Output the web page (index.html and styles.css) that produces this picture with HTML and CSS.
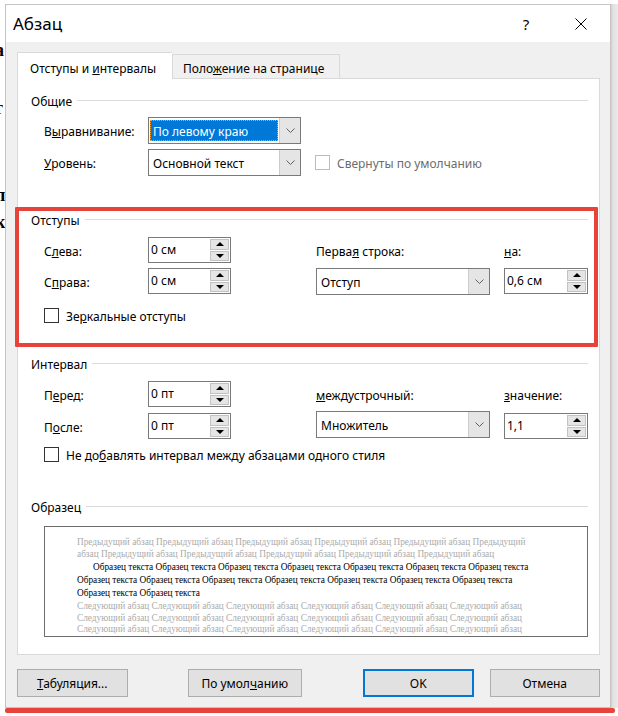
FILE: index.html
```html
<!DOCTYPE html>
<html lang="ru">
<head>
    <meta charset="UTF-8">
    <title>Абзац</title>
    <link rel="stylesheet" href="styles.css">
</head>
<body>
    <div class="desktop">
        <div class="doc-edge">
            <span class="doc-char c-a">а</span>
            <span class="doc-char c-t">т</span>
            <span class="doc-char c-p">п</span>
            <span class="doc-char c-k">к</span>
        </div>

        <div class="dialog">
            <div class="titlebar">
                <span class="title">Абзац</span>
                <span class="tb-btn tb-help">?</span>
                <span class="tb-btn tb-close">
                    <svg width="12" height="12" viewBox="0 0 12 12">
                        <path d="M0.5 0.5 L11.5 11.5 M11.5 0.5 L0.5 11.5" stroke="#000" stroke-width="1" fill="none"/>
                    </svg>
                </span>
            </div>

            <div class="dialog-body">
                <div class="tabs">
                    <div class="tab active">Отступы и <u>и</u>нтервалы</div>
                    <div class="tab">Поло<u>ж</u>ение на странице</div>
                </div>

                <div class="panel">
                    <!-- Общие -->
                    <section class="group">
                        <div class="group-head">Общие</div>
                        <div class="group-body general-grid">
                            <label>В<u>ы</u>равнивание:</label>
                            <div class="combo focused">
                                <div class="combo-value"><span class="combo-selected">По левому краю</span></div>
                                <div class="combo-btn"><svg width="9" height="5" viewBox="0 0 9 5"><polyline points="0.5,0.5 4.5,4.5 8.5,0.5" stroke="#606060" fill="none"/></svg></div>
                            </div>
                            <div></div>
                            <label><u>У</u>ровень:</label>
                            <div class="combo">
                                <div class="combo-value">Основной текст</div>
                                <div class="combo-btn"><svg width="9" height="5" viewBox="0 0 9 5"><polyline points="0.5,0.5 4.5,4.5 8.5,0.5" stroke="#606060" fill="none"/></svg></div>
                            </div>
                            <div class="check-cell disabled">
                                <span class="check"></span>
                                <span class="check-label">Свернуты по умолчанию</span>
                            </div>
                        </div>
                    </section>

                    <!-- Отступы -->
                    <section class="group group-indent">
                        <div class="group-head">Отступы</div>
                        <div class="group-body field-grid">
                            <label>С<u>л</u>ева:</label>
                            <div class="spin">
                                <div class="spin-value">0 см</div>
                                <div class="spin-btns"><span class="spin-btn spin-up"></span><span class="spin-btn spin-down"></span></div>
                            </div>
                            <label class="col-type">Перва<u>я</u> строка:</label>
                            <label class="col-by"><u>н</u>а:</label>

                            <label>С<u>п</u>рава:</label>
                            <div class="spin">
                                <div class="spin-value">0 см</div>
                                <div class="spin-btns"><span class="spin-btn spin-up"></span><span class="spin-btn spin-down"></span></div>
                            </div>
                            <div class="combo col-type">
                                <div class="combo-value">Отступ</div>
                                <div class="combo-btn"><svg width="9" height="5" viewBox="0 0 9 5"><polyline points="0.5,0.5 4.5,4.5 8.5,0.5" stroke="#606060" fill="none"/></svg></div>
                            </div>
                            <div class="spin col-by">
                                <div class="spin-value">0,6 см</div>
                                <div class="spin-btns"><span class="spin-btn spin-up"></span><span class="spin-btn spin-down"></span></div>
                            </div>
                        </div>
                        <div class="group-body check-row">
                            <span class="check"></span>
                            <span class="check-label">Зе<u>р</u>кальные отступы</span>
                        </div>
                    </section>

                    <!-- Интервал -->
                    <section class="group group-spacing">
                        <div class="group-head">Интервал</div>
                        <div class="group-body field-grid spacing-grid">
                            <label>П<u>е</u>ред:</label>
                            <div class="spin">
                                <div class="spin-value">0 пт</div>
                                <div class="spin-btns"><span class="spin-btn spin-up"></span><span class="spin-btn spin-down"></span></div>
                            </div>
                            <label class="col-type"><u>м</u>еждустрочный:</label>
                            <label class="col-by"><u>з</u>начение:</label>

                            <label>П<u>о</u>сле:</label>
                            <div class="spin">
                                <div class="spin-value">0 пт</div>
                                <div class="spin-btns"><span class="spin-btn spin-up"></span><span class="spin-btn spin-down"></span></div>
                            </div>
                            <div class="combo col-type raised">
                                <div class="combo-value">Множитель</div>
                                <div class="combo-btn"><svg width="9" height="5" viewBox="0 0 9 5"><polyline points="0.5,0.5 4.5,4.5 8.5,0.5" stroke="#606060" fill="none"/></svg></div>
                            </div>
                            <div class="spin col-by">
                                <div class="spin-value">1,1</div>
                                <div class="spin-btns"><span class="spin-btn spin-up"></span><span class="spin-btn spin-down"></span></div>
                            </div>
                        </div>
                        <div class="group-body check-row check-row-tight">
                            <span class="check"></span>
                            <span class="check-label">Не до<u>б</u>авлять интервал между абзацами одного стиля</span>
                        </div>
                    </section>

                    <!-- Образец -->
                    <section class="group group-sample">
                        <div class="group-head">Образец</div>
                        <div class="sample">
                            <div class="sample-prev">
                                <p>Предыдущий абзац Предыдущий абзац Предыдущий абзац Предыдущий абзац Предыдущий абзац Предыдущий</p>
                                <p>абзац Предыдущий абзац Предыдущий абзац Предыдущий абзац Предыдущий абзац Предыдущий абзац</p>
                            </div>
                            <div class="sample-cur">
                                <p class="first">Образец текста Образец текста Образец текста Образец текста Образец текста Образец текста Образец текста</p>
                                <p>Образец текста Образец текста Образец текста Образец текста Образец текста Образец текста Образец текста</p>
                                <p>Образец текста Образец текста</p>
                            </div>
                            <div class="sample-next">
                                <p>Следующий абзац Следующий абзац Следующий абзац Следующий абзац Следующий абзац Следующий абзац</p>
                                <p>Следующий абзац Следующий абзац Следующий абзац Следующий абзац Следующий абзац Следующий абзац</p>
                                <p>Следующий абзац Следующий абзац Следующий абзац Следующий абзац Следующий абзац Следующий абзац</p>
                                <p>Следующий абзац Следующий абзац Следующий абзац Следующий абзац Следующий абзац Следующий абзац</p>
                            </div>
                        </div>
                    </section>
                </div>

                <div class="buttons">
                    <button class="btn btn-tabs"><u>Т</u>абуляция...</button>
                    <button class="btn btn-default-set">По умол<u>ч</u>анию</button>
                    <button class="btn btn-ok">OK</button>
                    <button class="btn btn-cancel">Отмена</button>
                </div>
            </div>
        </div>

        <div class="shadow"></div>
    </div>

    <div class="red-line"></div>
</body>
</html>
```

FILE: styles.css
```css
/* Word "Абзац" dialog */
:root {
    --dlg-bg: #f0f0f0;
    --panel-border: #d9d9d9;
    --group-line: #dcdcdc;
    --field-border: #7a7a7a;
    --btn-bg: #e1e1e1;
    --btn-border: #adadad;
    --accent: #0078d7;
    --mark-red: #e8433a;
    --text: #000000;
    --text-disabled: #6d6d6d;
}

*,
*::before,
*::after {
    box-sizing: border-box;
    margin: 0;
    padding: 0;
}

body {
    position: relative;
    width: 618px;
    height: 716px;
    overflow: hidden;
    background: #ffffff;
    font-family: "Segoe UI", "Noto Sans", sans-serif;
    font-size: 12px;
    color: var(--text);
}

u {
    text-underline-offset: 1px;
}

.desktop {
    display: flex;
    align-items: flex-start;
}

/* edge of the document behind the dialog */
.doc-edge {
    width: 5px;
    height: 708px;
    overflow: hidden;
    display: flex;
    flex-direction: column;
    font-family: "Liberation Serif", serif;
    font-size: 18px;
    font-weight: bold;
    line-height: 20px;
}

.doc-char {
    display: block;
    margin-left: -5px;
}

.c-a { margin-top: 40px; }
.c-t { margin-top: 38px; font-weight: normal; }
.c-p { margin-top: 67px; }
.c-k { margin-top: 7px; }

.dialog {
    width: 606px;
    height: 704px;
    margin-top: 4px;
    background: var(--dlg-bg);
    border: 1px solid #c4c4c4;
    display: flex;
    flex-direction: column;
}

.shadow {
    width: 7px;
    height: 704px;
    margin-top: 4px;
    background: linear-gradient(to right, #cfcfcf, #e2e2e2 2px, #eaeaea);
}

.titlebar {
    height: 37px;
    background: #ffffff;
    display: flex;
    align-items: center;
    padding-left: 7px;
    padding-right: 6px;
}

.title {
    flex: 1;
    font-size: 17px;
}

.tb-btn {
    width: 46px;
    height: 37px;
    display: flex;
    align-items: center;
    justify-content: center;
}

.tb-help {
    font-size: 15px;
    margin-right: 9px;
}

.dialog-body {
    padding: 10px 10px 0 11px;
}

/* tabs */
.tabs {
    display: flex;
    align-items: flex-end;
    height: 26px;
}

.tab {
    position: relative;
    height: 24px;
    padding: 6px 0 0 10px;
    line-height: 16px;
    background: var(--dlg-bg);
    border: 1px solid var(--panel-border);
    border-bottom: none;
    width: 168px;
}

.tab.active {
    z-index: 1;
    width: 155px;
    height: 27px;
    margin-bottom: -1px;
    padding: 8px 0 0 12px;
    background: #ffffff;
    border-right: none;
}

.panel {
    position: relative;
    height: 577px;
    background: #ffffff;
    border: 1px solid var(--panel-border);
    padding: 14px 11px 0 13px;
}

.group-head {
    display: flex;
    align-items: center;
    gap: 5px;
    height: 16px;
    line-height: 16px;
    padding-top: 1px;
}

.group-head::after {
    content: "";
    flex: 1;
    height: 1px;
    margin-top: -3px;
    background: var(--group-line);
}

.group-body {
    margin-left: 13px;
}

.group-indent {
    position: relative;
    margin-top: 36px;
}

/* red annotation frame drawn over the group */
.group-indent::before {
    content: "";
    position: absolute;
    left: -16px;
    top: -5px;
    width: 583px;
    height: 140px;
    border: 4px solid var(--mark-red);
    border-radius: 1px;
    pointer-events: none;
}

.group-spacing {
    margin-top: 33px;
}

.group-sample {
    margin-top: 37px;
}

/* grids */
.general-grid {
    display: grid;
    grid-template-columns: 104px 153px auto;
    grid-auto-rows: 27px;
    row-gap: 5px;
    align-items: center;
    margin-top: 8px;
}

.field-grid {
    display: grid;
    grid-template-columns: 104px 83px 85px 174px 14px 84px;
    grid-auto-rows: 26px;
    row-gap: 5px;
    align-items: center;
    margin-top: 9px;
}

.general-grid label,
.field-grid label {
    padding-top: 2px;
}

.spacing-grid {
    row-gap: 6px;
}

.col-type { grid-column: 4; }
.col-by { grid-column: 6; }

/* combo box */
.combo {
    display: flex;
    height: 27px;
    border: 1px solid var(--field-border);
    background: #ffffff;
}

.combo.raised {
    align-self: start;
    margin-top: -2px;
}

.combo-value {
    flex: 1;
    display: flex;
    align-items: center;
    padding: 2px 0 0 4px;
    white-space: nowrap;
}

.combo.focused .combo-value {
    padding: 2px 1px 2px 1px;
}

.combo-selected {
    flex: 1;
    height: 100%;
    display: flex;
    align-items: center;
    padding: 1px 0 0 2px;
    background: var(--accent);
    color: #ffffff;
    border: 1px dotted #f7a13a;
}

.combo-btn {
    width: 21px;
    background: #e5e5e5;
    border-left: 1px solid #cccccc;
    display: flex;
    align-items: center;
    justify-content: center;
}

/* spin box */
.spin {
    display: flex;
    height: 26px;
    border: 1px solid var(--field-border);
    background: #ffffff;
}

.spin-value {
    flex: 1;
    padding-left: 2px;
    line-height: 24px;
    white-space: nowrap;
}

.spin-btns {
    width: 20px;
    display: flex;
    flex-direction: column;
    gap: 1px;
    padding: 1px 1px 1px 0;
}

.spin-btn {
    flex: 1;
    display: flex;
    align-items: center;
    justify-content: center;
    background: #e5e5e5;
    border: 1px solid #c2c2c2;
}

.spin-btn::before {
    content: "";
    border-left: 4px solid transparent;
    border-right: 4px solid transparent;
}

.spin-up::before { border-bottom: 4px solid #000000; }
.spin-down::before { border-top: 4px solid #000000; }

/* check boxes */
.check {
    width: 15px;
    height: 15px;
    flex: none;
    border: 1px solid #333333;
    background: #ffffff;
}

.check-label {
    padding-top: 2px;
}

.check-cell {
    display: flex;
    align-items: center;
    gap: 7px;
    padding-left: 14px;
}

.check-cell.disabled {
    color: var(--text-disabled);
}

.check-cell.disabled .check {
    border-color: #bcbcbc;
}

.check-row {
    display: flex;
    align-items: center;
    gap: 7px;
    height: 16px;
    margin-top: 13px;
}

.check-row-tight {
    margin-top: 7px;
}

/* sample preview */
.sample {
    width: 544px;
    height: 111px;
    margin: 11px 0 0 13px;
    padding: 10px 0 0 32px;
    border: 1px solid #6d6d6d;
    overflow: hidden;
    font-family: "Liberation Serif", "Times New Roman", serif;
    font-size: 9.3px;
    white-space: nowrap;
}

.sample-prev,
.sample-next {
    color: #ababab;
    line-height: 11.5px;
}

.sample-cur {
    margin-top: 1px;
    line-height: 13px;
}

.sample-cur .first {
    text-indent: 16px;
}

.sample-next {
    margin-top: 1px;
}

/* dialog buttons */
.buttons {
    display: flex;
    margin-top: 14px;
}

.btn {
    width: 111px;
    height: 28px;
    padding-top: 1px;
    background: var(--btn-bg);
    border: 1px solid var(--btn-border);
    font: inherit;
    color: var(--text);
}

.btn-default-set {
    width: 115px;
    margin-left: 60px;
}

.btn-ok {
    margin-left: 61px;
    border: 2px solid var(--accent);
}

.btn-cancel {
    margin-left: 16px;
}

.red-line {
    position: absolute;
    left: 5px;
    top: 708px;
    width: 610px;
    height: 5px;
    background: var(--mark-red);
    border-radius: 2px;
}
```
